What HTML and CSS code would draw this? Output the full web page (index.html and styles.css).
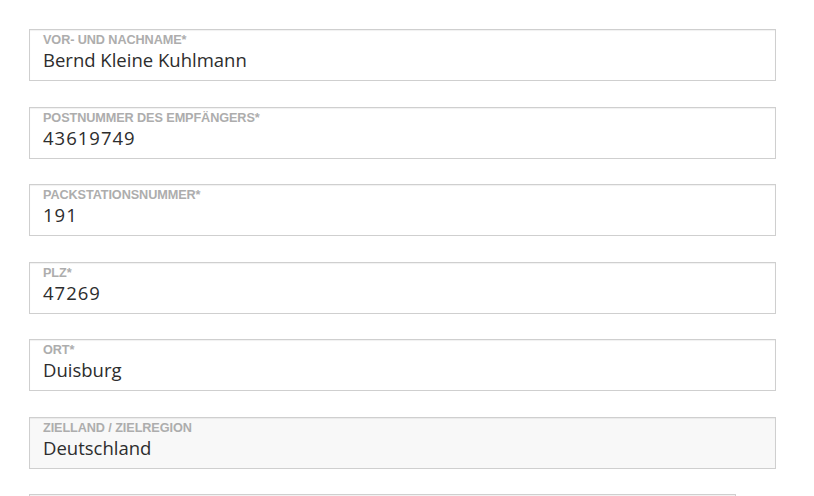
FILE: index.html
```html
<!DOCTYPE html>
<html lang="de">
<head>
<meta charset="utf-8">
<link rel="stylesheet" href="styles.css">
</head>
<body>
<form class="form">
  <div class="field">
    <label class="label">VOR- UND NACHNAME*</label>
    <div class="value">Bernd Kleine Kuhlmann</div>
  </div>
  <div class="field">
    <label class="label">POSTNUMMER DES EMPFÄNGERS*</label>
    <div class="value num">43619749</div>
  </div>
  <div class="field">
    <label class="label">PACKSTATIONSNUMMER*</label>
    <div class="value num">191</div>
  </div>
  <div class="field">
    <label class="label">PLZ*</label>
    <div class="value num">47269</div>
  </div>
  <div class="field">
    <label class="label">ORT*</label>
    <div class="value">Duisburg</div>
  </div>
  <div class="field field-disabled">
    <label class="label">ZIELLAND / ZIELREGION</label>
    <div class="value">Deutschland</div>
  </div>
  <div class="field field-short"></div>
</form>
</body>
</html>
```
FILE: styles.css
```css
html, body {
  margin: 0;
  padding: 0;
  background: #fff;
}
body {
  padding: 29px 38px 0 29px;
  overflow: hidden;
  height: 496px;
  box-sizing: border-box;
}
.form {
  display: flex;
  flex-direction: column;
  gap: 25.5px;
  width: 747px;
}
.field {
  box-sizing: border-box;
  height: 52px;
  border: 1px solid #cfcfcf;
  box-shadow: inset 0 1px 1px rgba(0,0,0,0.06);
  padding: 3px 13px 0 13px;
  display: flex;
  flex-direction: column;
  flex-shrink: 0;
}
.field-disabled {
  background: #f8f8f8;
}
.field-short {
  width: 707px;
}
.label {
  font-family: "Liberation Sans", Arial, sans-serif;
  font-weight: bold;
  font-size: 12.7px;
  line-height: 14px;
  color: #adadad;
  letter-spacing: -0.1px;
}
.value {
  font-family: "Open Sans", sans-serif;
  font-size: 18.5px;
  line-height: 24px;
  color: #2d2d2d;
  margin-top: 1px;
}
.num {
  letter-spacing: 1px;
}
```
